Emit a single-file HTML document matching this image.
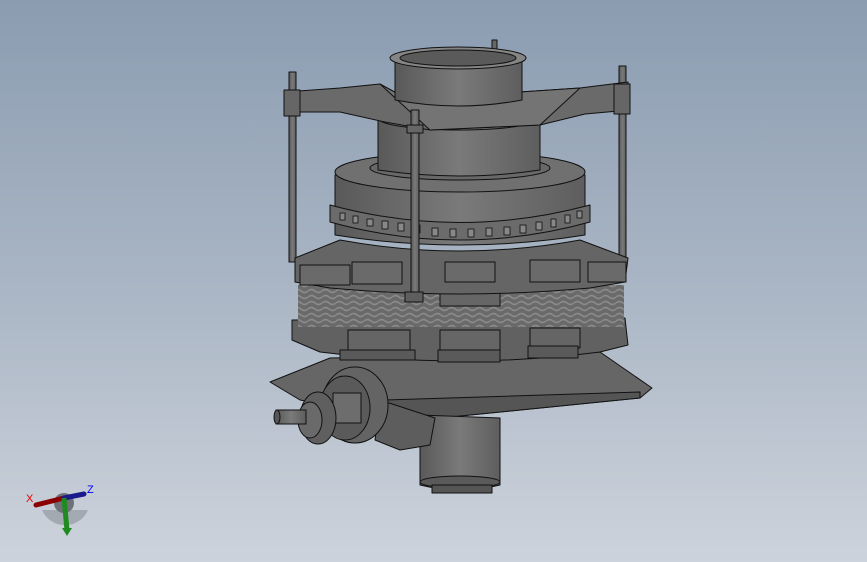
<!DOCTYPE html>
<html><head><meta charset="utf-8"><style>
html,body{margin:0;padding:0;width:867px;height:562px;overflow:hidden}
body{background:linear-gradient(#8b9cb1 0%,#a9b5c4 50%,#cdd3dc 100%)}
svg{position:absolute;left:0;top:0}
</style></head><body>
<svg width="867" height="562" viewBox="0 0 867 562" xmlns="http://www.w3.org/2000/svg">
<defs>
<linearGradient id="cyl" x1="0" x2="1"><stop offset="0" stop-color="#595959"/><stop offset="0.5" stop-color="#7a7a7a"/><stop offset="1" stop-color="#5e5e5e"/></linearGradient>
<pattern id="spr" width="14" height="6" patternUnits="userSpaceOnUse"><rect width="14" height="6" fill="#6a6a6a"/><path d="M0 3 Q3.5 0 7 3 T14 3" stroke="#8a8a8a" stroke-width="1.6" fill="none"/></pattern>
</defs>
<g stroke="#111" stroke-width="1" stroke-linejoin="round">
<rect x="289" y="72" width="7" height="190" fill="url(#cyl)"/>
<rect x="619" y="66" width="7" height="196" fill="url(#cyl)"/>
<rect x="492" y="40" width="5" height="20" fill="#666"/>
<!-- base -->
<path d="M270 382 L330 358 L600 352 L652 388 L640 398 L440 418 L380 415 L300 400 Z" fill="#666"/>
<path d="M385 400 L640 392 L640 398 L440 418 L385 412 Z" fill="#555"/>
<path d="M420 415 L500 418 L500 485 Q460 495 420 485 Z" fill="url(#cyl)"/>
<ellipse cx="460" cy="482" rx="40" ry="6" fill="#5a5a5a"/>
<rect x="432" y="485" width="60" height="8" fill="#555"/>
<path d="M380 400 L435 418 L430 445 L400 450 L375 440 Z" fill="#5d5d5d"/>
<ellipse cx="355" cy="405" rx="33" ry="38" fill="#646464"/>
<ellipse cx="345" cy="408" rx="25" ry="32" fill="#5a5a5a"/>
<rect x="333" y="393" width="28" height="30" fill="#6d6d6d"/>
<ellipse cx="318" cy="418" rx="18" ry="26" fill="#5f5f5f"/>
<ellipse cx="310" cy="420" rx="12" ry="18" fill="#6a6a6a"/>
<rect x="276" y="410" width="30" height="14" fill="url(#cyl)"/>
<ellipse cx="277" cy="417" rx="3" ry="7" fill="#555"/>
<!-- lower ring -->
<path d="M292 320 L625 318 L628 345 L600 352 Q460 370 320 352 L292 340 Z" fill="#616161"/>
<!-- springs -->
<rect x="298" y="285" width="326" height="42" fill="url(#spr)" stroke="none"/>
<rect x="348" y="330" width="62" height="22" fill="#656565"/>
<rect x="440" y="292" width="60" height="14" fill="#666"/>
<rect x="440" y="330" width="60" height="22" fill="#666"/>
<rect x="530" y="328" width="50" height="20" fill="#656565"/>
<rect x="340" y="350" width="75" height="10" fill="#5a5a5a"/>
<rect x="438" y="350" width="62" height="12" fill="#5a5a5a"/>
<rect x="528" y="346" width="50" height="12" fill="#5a5a5a"/>
<!-- large cylinder -->
<path d="M335 175 L585 175 L585 235 Q460 255 335 235 Z" fill="url(#cyl)"/>
<ellipse cx="460" cy="172" rx="125" ry="20" fill="#707070"/>
<ellipse cx="460" cy="168" rx="90" ry="12" fill="#686868"/>
<path d="M330 205 Q460 240 590 205 L590 222 Q460 258 330 222 Z" fill="#6b6b6b"/>
<g fill="#888" stroke="#222">
<rect x="340" y="213" width="5" height="7"/><rect x="353" y="216" width="5" height="7"/><rect x="367" y="219" width="6" height="7"/><rect x="382" y="221" width="6" height="8"/><rect x="398" y="223" width="6" height="8"/><rect x="414" y="225" width="6" height="8"/><rect x="432" y="228" width="6" height="8"/><rect x="450" y="229" width="6" height="8"/><rect x="468" y="229" width="6" height="8"/><rect x="486" y="228" width="6" height="8"/><rect x="504" y="227" width="6" height="8"/><rect x="520" y="225" width="6" height="8"/><rect x="536" y="222" width="6" height="8"/><rect x="551" y="219" width="5" height="8"/><rect x="565" y="215" width="5" height="8"/><rect x="577" y="211" width="5" height="7"/>
</g>
<!-- upper ring -->
<path d="M295 258 L340 240 Q460 262 580 240 L628 258 L625 282 L590 288 Q460 300 330 288 L295 282 Z" fill="#656565"/>
<rect x="300" y="265" width="50" height="20" fill="#6a6a6a"/>
<rect x="352" y="262" width="50" height="22" fill="#6a6a6a"/>
<rect x="445" y="262" width="50" height="20" fill="#6a6a6a"/>
<rect x="530" y="260" width="50" height="22" fill="#6a6a6a"/>
<rect x="588" y="262" width="38" height="20" fill="#6a6a6a"/>
<!-- mid cylinder -->
<path d="M378 118 L540 118 L540 170 Q460 182 378 170 Z" fill="url(#cyl)"/>
<ellipse cx="459" cy="118" rx="81" ry="12" fill="#707070"/>
<!-- spider -->
<path d="M285 92 L340 88 L380 84 L400 95 L520 92 L580 88 L628 82 L630 110 L585 114 L540 125 L430 130 L385 122 L340 112 L285 112 Z" fill="#6a6a6a"/>
<path d="M380 84 L400 95 L520 92 L580 88 L540 125 L430 130 Z" fill="#747474"/>
<!-- hopper -->
<path d="M395 60 L522 60 L522 100 Q458 112 395 100 Z" fill="url(#cyl)"/>
<ellipse cx="458" cy="58" rx="68" ry="11" fill="#858585"/>
<ellipse cx="458" cy="58" rx="58" ry="8" fill="#5a5a5a"/>
<rect x="411" y="110" width="8" height="190" fill="url(#cyl)"/>
<rect x="407" y="125" width="16" height="8" fill="#666"/>
<rect x="405" y="292" width="18" height="10" fill="#5e5e5e"/>
<rect x="284" y="90" width="16" height="26" fill="#666"/>
<rect x="614" y="84" width="16" height="30" fill="#666"/>
</g>
<g>
<path d="M42 510 A25 25 0 0 0 88 510 Z" fill="#9aa0a8" opacity="0.8"/>
<circle cx="64" cy="503" r="10" fill="#6e7278"/>
<line x1="36" y1="505" x2="64" y2="498" stroke="#8b0000" stroke-width="5" stroke-linecap="round"/>
<line x1="64" y1="498" x2="84" y2="494" stroke="#1a1a8c" stroke-width="5" stroke-linecap="round"/>
<line x1="64" y1="498" x2="67" y2="530" stroke="#1f8a1f" stroke-width="5"/>
<path d="M62 528 L72 528 L67 536 Z" fill="#1f8a1f"/>
<text x="26" y="502" font-family="Liberation Sans,sans-serif" font-size="11" fill="#e00">X</text>
<text x="87" y="493" font-family="Liberation Sans,sans-serif" font-size="11" fill="#00f">Z</text>
</g>
</svg>
</body></html>
